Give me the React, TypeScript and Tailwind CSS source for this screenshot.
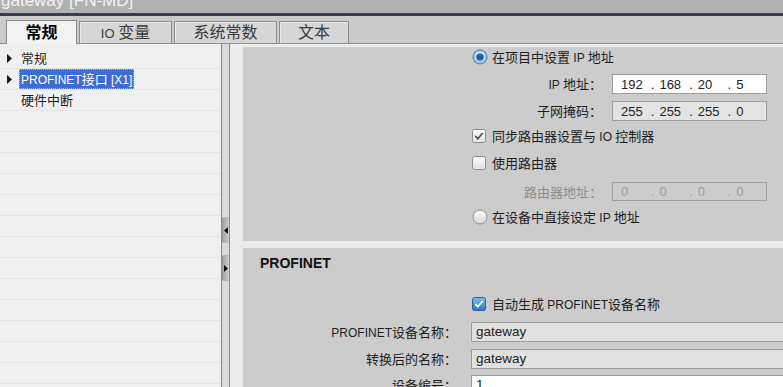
import React from 'react';

const CJK = /([\u2E80-\u9FFF\uFF00-\uFFEF]+)/;

// CJK runs at 13px, latin runs a bit smaller like the Tahoma glyphs in TIA Portal
const Mixed: React.FC<{ text: string; latin?: string; cjk?: string }> = ({
  text,
  latin = 'text-[12px]',
  cjk = 'text-[13px]',
}) => (
  <span className="whitespace-nowrap">
    {text
      .split(CJK)
      .filter(Boolean)
      .map((part, i) =>
        CJK.test(part) ? (
          <span key={i} className={cjk}>
            {part}
          </span>
        ) : (
          <span key={i} className={`${latin} whitespace-pre`}>
            {part}
          </span>
        ),
      )}
  </span>
);

const Radio: React.FC<{ checked?: boolean }> = ({ checked }) =>
  checked ? (
    <svg width="16" height="16" viewBox="0 0 16 16" className="shrink-0">
      <defs>
        <radialGradient id="radOn" cx="50%" cy="40%" r="60%">
          <stop offset="0" stopColor="#e9f4fd" />
          <stop offset="1" stopColor="#8cbfe6" />
        </radialGradient>
      </defs>
      <circle cx="8" cy="8" r="7" fill="url(#radOn)" stroke="#3a78ad" />
      <circle cx="8" cy="8" r="3.6" fill="#1b5ea6" />
    </svg>
  ) : (
    <svg width="16" height="16" viewBox="0 0 16 16" className="shrink-0">
      <defs>
        <linearGradient id="radOff" x1="0" y1="0" x2="0" y2="1">
          <stop offset="0" stopColor="#fbfbfb" />
          <stop offset="1" stopColor="#d9d9d9" />
        </linearGradient>
      </defs>
      <circle cx="8" cy="8" r="7" fill="url(#radOff)" stroke="#8a8a8a" />
    </svg>
  );

const Check: React.FC<{ variant: 'gray' | 'off' | 'blue' }> = ({ variant }) => (
  <svg width="14" height="14" viewBox="0 0 14 14" className="shrink-0">
    <defs>
      <linearGradient id={`cb-${variant}`} x1="0" y1="0" x2="0" y2="1">
        {variant === 'blue' ? (
          <>
            <stop offset="0" stopColor="#7cc0f0" />
            <stop offset="1" stopColor="#2c72c8" />
          </>
        ) : (
          <>
            <stop offset="0" stopColor="#fcfcfc" />
            <stop offset="1" stopColor="#e0e0e0" />
          </>
        )}
      </linearGradient>
    </defs>
    <rect
      x="0.5"
      y="0.5"
      width="13"
      height="13"
      rx="2"
      fill={`url(#cb-${variant})`}
      stroke={variant === 'blue' ? '#2d5e98' : '#8c8c8c'}
    />
    {variant !== 'off' && (
      <path
        d="M3.2 7 L5.8 9.6 L10.8 4"
        fill="none"
        stroke={variant === 'blue' ? '#f2f8ff' : '#555'}
        strokeWidth="1.8"
      />
    )}
  </svg>
);

const IpField: React.FC<{ parts: string[]; bg: string; dim?: boolean }> = ({ parts, bg, dim }) => (
  <div
    className={`flex items-center w-[155px] h-full border border-[#9e9e9e] pl-[8px] text-[13px] ${bg} ${
      dim ? 'text-[#9b9b9b]' : 'text-[#222]'
    }`}
  >
    {parts.map((p, i) => (
      <React.Fragment key={i}>
        {i > 0 && <span className="w-[9px]">.</span>}
        <span className="w-[31px]">{p}</span>
      </React.Fragment>
    ))}
  </div>
);

const Tab: React.FC<{ label: string; w: string; active?: boolean }> = ({ label, w, active }) =>
  active ? (
    <div
      className={`${w} h-[24px] -mb-px relative flex items-center justify-center border border-b-0 border-[#8c8c8c] bg-[#f2f2f2] font-bold text-black`}
    >
      <Mixed text={label} latin="text-[13px]" cjk="text-[16px]" />
    </div>
  ) : (
    <div
      className={`${w} h-[22px] flex items-center justify-center border border-b-0 border-[#8c8c8c] bg-[#d6d6d6] shadow-[inset_1px_1px_0_#ececec] text-[#3a3a3a]`}
    >
      <Mixed text={label} latin="text-[13px]" cjk="text-[16px]" />
    </div>
  );

const TreeArrow = () => (
  <svg width="5" height="9" viewBox="0 0 5 9">
    <polygon points="0,0 5,4.5 0,9" fill="#1a1a1a" />
  </svg>
);

const rows = Array.from({ length: 16 });

const profinetRows = [
  { label: 'PROFINET设备名称：', value: 'gateway', bg: 'bg-[#e1e1e1]', mt: 'mt-[8px]' },
  { label: '转换后的名称：', value: 'gateway', bg: 'bg-[#e1e1e1]', mt: 'mt-[7px]' },
  { label: '设备编号：', value: '1', bg: 'bg-white', mt: 'mt-[6px]' },
];

export default function App() {
  return (
    <div className="w-[783px] h-[387px] overflow-hidden flex flex-col bg-[#ececec] text-[#1e1e1e] font-['Liberation_Sans','Noto_Sans_CJK_SC',sans-serif]">
      <div className="h-[13px] shrink-0 bg-[#b1b1b1] overflow-hidden">
        <div className="-mt-[8px] pl-px text-[17px] leading-none text-[#f3f3f3] whitespace-nowrap">gateway [FN-MD]</div>
      </div>
      <div className="h-[3px] shrink-0 bg-[#363c52]" />

      <div className="h-[28px] shrink-0 flex items-end gap-[2px] pl-[6px] bg-[#cbcbcb] border-b border-[#8f8f8f]">
        <Tab label="常规" w="w-[71px]" active />
        <Tab label="IO 变量" w="w-[93px]" />
        <Tab label="系统常数" w="w-[103px]" />
        <Tab label="文本" w="w-[70px]" />
      </div>

      <div className="flex flex-1 min-h-0">
        {/* tree */}
        <div className="w-[221px] shrink-0 bg-[#f0f0f0] pt-[4px] leading-none">
          {rows.map((_, i) => (
            <div key={i} className="h-[21px] flex items-center border-b border-[#e3e3e3]">
              <div className="w-[19px] pl-[7px] flex items-center">{(i === 0 || i === 1) && <TreeArrow />}</div>
              {i === 0 && (
                <span className="px-[2px]">
                  <Mixed text="常规" />
                </span>
              )}
              {i === 1 && (
                <span className="h-[20px] flex items-center px-[2px] bg-[#3d6dd4] text-white outline outline-1 outline-dotted outline-[#9fb8ee] -outline-offset-1">
                  <Mixed text="PROFINET接口 [X1]" />
                </span>
              )}
              {i === 2 && (
                <span className="px-[2px]">
                  <Mixed text="硬件中断" />
                </span>
              )}
            </div>
          ))}
        </div>

        {/* splitter */}
        <div className="w-[9px] shrink-0 flex flex-col border-x border-[#8a8a8a] bg-[#dadada]">
          <div className="h-[173px]" />
          <div className="h-[26px] flex items-center justify-center bg-gradient-to-r from-[#9c9c9c] to-[#d0d0d0] border-y border-[#b8b8b8]">
            <svg width="4" height="7" viewBox="0 0 4 7">
              <polygon points="4,0 0,3.5 4,7" fill="#111" />
            </svg>
          </div>
          <div className="h-[12px]" />
          <div className="h-[26px] flex items-center justify-center bg-gradient-to-r from-[#9c9c9c] to-[#d0d0d0] border-y border-[#b8b8b8]">
            <svg width="4" height="7" viewBox="0 0 4 7">
              <polygon points="0,0 4,3.5 0,7" fill="#111" />
            </svg>
          </div>
        </div>

        {/* properties */}
        <div className="flex-1 min-w-0 flex flex-col gap-[7px] pl-[13px] pt-[3px] leading-none">
          <div className="h-[194px] shrink-0 bg-[#cccccc] flex flex-col">
            <div className="h-[19px] flex items-center gap-[4px] pl-[229px]">
              <Radio checked />
              <Mixed text="在项目中设置 IP 地址" />
            </div>
            <div className="mt-[8px] h-[20px] flex items-center">
              <div className="w-[359px] shrink-0 text-right">
                <Mixed text="IP 地址：" />
              </div>
              <div className="ml-[10px] h-full">
                <IpField parts={['192', '168', '20', '5']} bg="bg-white" />
              </div>
            </div>
            <div className="mt-[7px] h-[20px] flex items-center">
              <div className="w-[359px] shrink-0 text-right">
                <Mixed text="子网掩码：" />
              </div>
              <div className="ml-[10px] h-full">
                <IpField parts={['255', '255', '255', '0']} bg="bg-[#e3e3e3]" />
              </div>
            </div>
            <div className="mt-[5px] h-[20px] flex items-center gap-[6px] pl-[229px]">
              <Check variant="gray" />
              <Mixed text="同步路由器设置与 IO 控制器" />
            </div>
            <div className="mt-[7px] h-[20px] flex items-center gap-[6px] pl-[229px]">
              <Check variant="off" />
              <Mixed text="使用路由器" />
            </div>
            <div className="mt-[9px] h-[19px] flex items-center">
              <div className="w-[359px] shrink-0 text-right text-[#8d8d8d]">
                <Mixed text="路由器地址：" />
              </div>
              <div className="ml-[10px] h-full">
                <IpField parts={['0', '0', '0', '0']} bg="bg-transparent" dim />
              </div>
            </div>
            <div className="mt-[6px] h-[20px] flex items-center gap-[4px] pl-[229px]">
              <Radio />
              <Mixed text="在设备中直接设定 IP 地址" />
            </div>
          </div>

          <div className="flex-1 bg-[#cccccc] flex flex-col">
            <div className="mt-[5px] h-[20px] flex items-center pl-[17px] text-[14px] font-bold text-[#111]">PROFINET</div>
            <div className="mt-[21px] h-[20px] flex items-center gap-[6px] pl-[229px]">
              <Check variant="blue" />
              <Mixed text="自动生成 PROFINET设备名称" />
            </div>
            {profinetRows.map((r) => (
              <div key={r.label} className={`${r.mt} h-[20px] shrink-0 flex items-center`}>
                <div className="w-[214px] shrink-0 text-right">
                  <Mixed text={r.label} />
                </div>
                <div
                  className={`ml-[14px] w-[330px] h-full shrink-0 flex items-center border border-[#9c9c9c] pl-[4px] text-[13.5px] text-[#222] ${r.bg}`}
                >
                  {r.value}
                </div>
              </div>
            ))}
          </div>
        </div>
      </div>
    </div>
  );
}
